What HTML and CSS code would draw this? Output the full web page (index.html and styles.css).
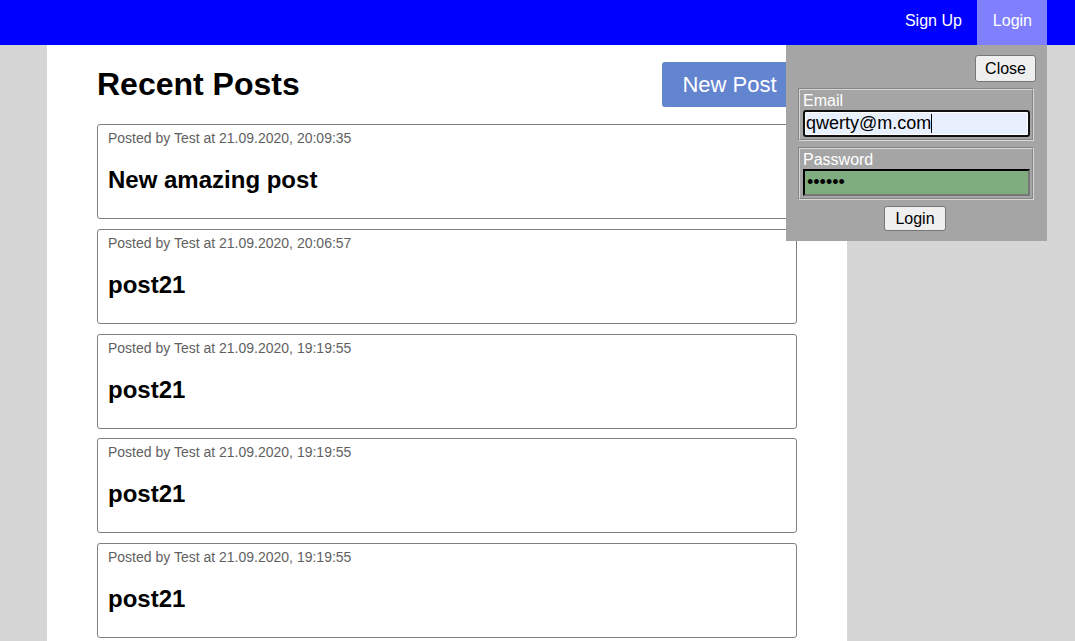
FILE: index.html
```html
<!DOCTYPE html>
<html>
<head>
<meta charset="utf-8">
<link rel="stylesheet" href="styles.css">
</head>
<body>
<header class="topbar">
  <a class="nav-link" href="#">Sign Up</a>
  <a class="nav-link active" href="#">Login</a>
  <div class="login-drop">
    <div class="drop-close-row"><button class="btn">Close</button></div>
    <fieldset class="field">
      <label class="field-label">Email</label>
      <div class="field-input email">qwerty@m.com<span class="caret"></span></div>
    </fieldset>
    <fieldset class="field">
      <label class="field-label">Password</label>
      <input class="field-input password" type="password" value="123456">
    </fieldset>
    <div class="drop-submit-row"><button class="btn btn-small">Login</button></div>
  </div>
</header>
<main class="main">
  <div class="page-head">
    <h1 class="page-title">Recent Posts</h1>
    <button class="new-post">New Post</button>
  </div>
  <div class="post">
    <div class="post-meta">Posted by Test at 21.09.2020, 20:09:35</div>
    <h2 class="post-title">New amazing post</h2>
  </div>
  <div class="post">
    <div class="post-meta">Posted by Test at 21.09.2020, 20:06:57</div>
    <h2 class="post-title">post21</h2>
  </div>
  <div class="post">
    <div class="post-meta">Posted by Test at 21.09.2020, 19:19:55</div>
    <h2 class="post-title">post21</h2>
  </div>
  <div class="post">
    <div class="post-meta">Posted by Test at 21.09.2020, 19:19:55</div>
    <h2 class="post-title">post21</h2>
  </div>
  <div class="post">
    <div class="post-meta">Posted by Test at 21.09.2020, 19:19:55</div>
    <h2 class="post-title">post21</h2>
  </div>
</main>
</body>
</html>
```
FILE: styles.css
```css
html, body {
  margin: 0;
  padding: 0;
}
body {
  background: #d6d6d6;
  font-family: "Liberation Sans", Arial, sans-serif;
  height: 641px;
  overflow: hidden;
}
.topbar {
  position: relative;
  height: 45px;
  background: #0000ff;
  display: flex;
  justify-content: flex-end;
  padding-right: 28px;
}
.nav-link {
  display: block;
  color: #fff;
  text-decoration: none;
  font-size: 16px;
  line-height: 42px;
  padding: 0 15px;
}
.nav-link.active {
  background: #8080ff;
  padding-left: 16px;
}
.login-drop {
  position: absolute;
  top: 45px;
  right: 28px;
  width: 261px;
  box-sizing: border-box;
  background: #a5a5a5;
  padding: 10px 13px 10px 12px;
  z-index: 5;
}
.drop-close-row {
  display: flex;
  justify-content: flex-end;
  margin-right: -2px;
  margin-bottom: 6px;
}
.btn {
  font-family: "Liberation Sans", Arial, sans-serif;
  font-size: 16px;
  line-height: 19px;
  padding: 3px 9px;
  background: #efefef;
  color: #000;
  border: 1px solid #767676;
  border-radius: 3px;
}
.btn-small {
  padding: 2px 10px;
}
.field {
  margin: 0 0 6px 0;
  padding: 1px 2px 2px 3px;
  border: 2px groove #d8d8d8;
}
.field-label {
  display: block;
  color: #fff;
  font-size: 16px;
  line-height: 19px;
}
.field-input {
  display: block;
  box-sizing: border-box;
  width: 227px;
  height: 27px;
  margin: 0;
  padding: 0 1px;
  font-family: "Liberation Sans", Arial, sans-serif;
  font-size: 18px;
  color: #000;
}
.field-input.email {
  background: #e8f0fe;
  border: 2px solid #111;
  border-radius: 3px;
  box-shadow: inset 0 0 0 1px #fff;
  line-height: 23px;
  padding-left: 1px;
}
.caret {
  display: inline-block;
  width: 1px;
  height: 19px;
  background: #000;
  vertical-align: -4px;
}
.field-input.password {
  background: #7fad7f;
  border: 2px inset #777;
  border-top-color: #222;
  border-left-color: #222;
  padding-left: 2px;
}
.drop-submit-row {
  display: flex;
  justify-content: center;
  padding-right: 2px;
}
.main {
  width: 800px;
  box-sizing: border-box;
  margin-left: 47px;
  background: #fff;
  min-height: 596px;
  padding: 17px 50px 1px;
}
.page-head {
  display: flex;
  justify-content: space-between;
  align-items: center;
  margin-bottom: 17px;
}
.page-title {
  margin: 0;
  font-size: 32px;
  line-height: 37px;
  font-weight: bold;
  color: #000;
}
.new-post {
  height: 45px;
  width: 135px;
  background: #6384cf;
  color: #fff;
  border: none;
  border-radius: 3px;
  font-family: "Liberation Sans", Arial, sans-serif;
  font-size: 22px;
  padding: 0;
}
.post {
  border: 1px solid #808080;
  border-radius: 3px;
  padding: 5px 10px 24px;
  margin-bottom: 9.8px;
}
.post-meta {
  font-size: 14px;
  line-height: 16px;
  color: #5f5f5f;
}
.post-title {
  margin: 20px 0 0;
  font-size: 24px;
  line-height: 28px;
  font-weight: bold;
  color: #000;
}
```
